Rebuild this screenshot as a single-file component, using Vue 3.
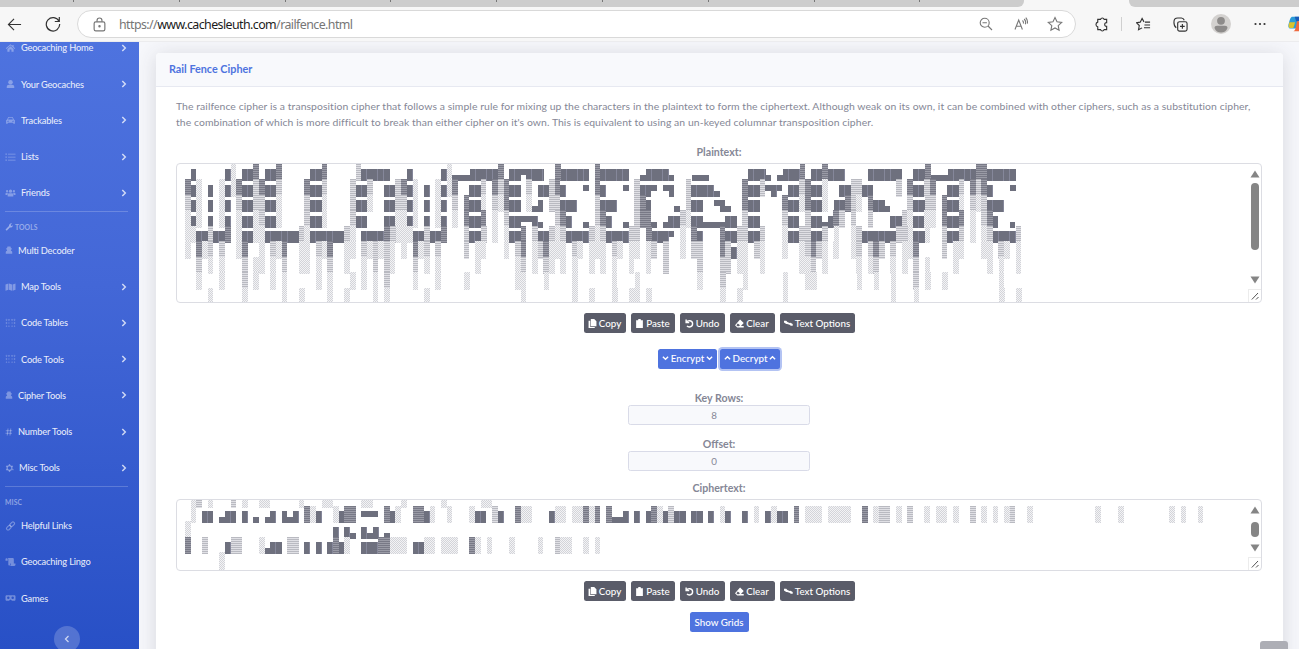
<script setup>
const letters = {
  W: [' █     █░', '▓█░ █ ░█░', '▒█░ █ ░█ ', '░█░ █ ░█ ', '░░██▒██▓ ', '░ ▓░▒ ▒  ', '  ▒ ░ ░  ', '  ░   ░  ', '    ░    '],
  I: [' ██▓', '▓██▒', '▒██▒', '░██░', '░██░', '░▓  ', ' ▒ ░', ' ▒ ░', ' ░  '],
  L: [' ██▓    ', '▓██▒    ', '▒██░    ', '▒██░    ', '░██████▒', '░ ▒░▓  ░', '░ ░ ▒  ░', '  ░ ░   ', '    ░  ░'],
  O: [' ▒█████  ', '▒██▒  ██▒', '▒██░  ██▒', '▒██   ██░', '░ ████▓▒░', '░ ▒░▒░▒░ ', '  ░ ▒ ▒░ ', '░ ░ ░ ▒  ', '    ░ ░  '],
  T: ['▄▄▄█████▓', '▓  ██▒ ▓▒', '▒ ▓██░ ▒░', '░ ▓██▓ ░ ', '  ▒██▒ ░ ', '  ▒ ░░   ', '    ░    ', '  ░      ', '         '],
  R: [' ██▀███  ', '▓██ ▒ ██▒', '▓██ ░▄█ ▒', '▒██▀▀█▄  ', '░██▓ ▒██▒', '░ ▒▓ ░▒▓░', '  ░▒ ░ ▒░', '  ░░   ░ ', '   ░     '],
  E: ['▓█████ ', '▓█   ▀ ', '▒███   ', '▒▓█  ▄ ', '░▒████▒', '░░ ▒░ ░', ' ░ ░  ░', '   ░   ', '   ░  ░'],
  C: [' ▄████▄  ', '▒██▀ ▀█  ', '▒▓█    ▄ ', '▒▓▓▄ ▄██▒', '▒ ▓███▀ ░', '░ ░▒ ▒  ░', '  ░  ▒   ', '░        ', '░ ░      '],
  A: [' ▄▄▄      ', '▒████▄    ', '▒██  ▀█▄  ', '░██▄▄▄▄██ ', ' ▓█   ▓██▒', ' ▒▒   ▓▒█░', '  ▒   ▒▒ ░', '  ░   ▒   ', '      ░  ░'],
  M: [' ███▄ ▄███▓', '▓██▒▀█▀ ██▒', '▓██    ▓██░', '▒██    ▒██ ', '▒██▒   ░██▒', '░ ▒░   ░  ░', '░  ░      ░', '░      ░   ', '       ░   '],
  P: [' ██▓███  ', '▓██░  ██▒', '▓██░ ██▓▒', '▒██▄█▓▒ ▒', '▒██▒ ░  ░', '▒▓▒░ ░  ░', '░▒ ░     ', '░░       ', '         '],
  S: ['  ██████ ', '▒██    ▒ ', '░ ▓██▄   ', '  ▒   ██▒', '▒██████▒▒', '▒ ▒▓▒ ▒ ░', '░ ░▒  ░ ░', '░  ░  ░  ', '      ░  ']
}
const kinds = { '█': 'full', '▄': 'lower', '▀': 'upper', '▓': 'dark', '▒': 'medium', '░': 'light', ' ': 'blank' }
function runs(line) {
  return (line.match(/(.)\1*/gu) || []).map(t => ({ t, n: [...t].length, k: kinds[t[0]] }))
}
const plain = Array.from({ length: 9 }, (_, r) =>
  runs([...'WILLOWTREECAMPSITE'].map(c => letters[c][r]).join('')))

function place(parts) {
  let s = ''
  for (const [at, t] of parts) s = s.padEnd(at, ' ') + t
  return runs(s)
}
const cipher = [
  [[1, '░▒'], [4, '░'], [8, '▒'], [10, '░'], [13, '░░'], [20, '░'], [24, '░░'], [31, '░░'], [38, '░'], [45, '░'], [52, '░░']],
  [[1, '░'], [3, '██'], [6, '▄██'], [10, '█'], [12, '▄'], [14, '▄█'], [17, '█▄█'], [21, '▓░█'], [26, '░█▓▓'], [31, '▀▀▀'], [35, '▓█░'], [40, '▓▓█░'], [46, '░'], [50, '░██'], [54, '▒█'], [58, '▓░░'], [64, '█░░'], [68, '░░▓░▓'], [74, '▓▄▄█'], [79, '█'], [81, '█▓░█▒██'], [89, '██'], [92, '█'], [94, '░█'], [98, '█'], [100, '░'], [102, '█░██'], [107, '▓'], [109, '░░░'], [113, '░░░░'], [119, '▓'], [121, '░▒▒'], [125, '░'], [127, '▒'], [130, '░'], [132, '░░'], [135, '░'], [138, '▒'], [140, '░'], [142, '░'], [144, '░▒'], [148, '░'], [160, '░'], [164, '░'], [173, '░'], [175, '░'], [178, '░']],
  [[0, '░'], [26, '█'], [28, '█▄'], [31, '█▄█'], [35, '▄']],
  [[0, '▓'], [3, '▒'], [7, '█▒▒'], [13, '░▄██'], [18, '▒▒'], [21, '█'], [23, '█'], [25, '█▓█░'], [31, '███▓▓░░░'], [40, '██░░'], [45, '░░░'], [50, '▓░'], [53, '░'], [57, '░'], [62, '░'], [65, '▒░░'], [70, '░'], [72, '░']],
  [[6, '░']]
].map(place)

const areas = { plain, cipher }
const groups = [
  { items: [
    { icon: 'home', label: 'Geocaching Home', more: true },
    { icon: 'user', label: 'Your Geocaches', more: true },
    { icon: 'car', label: 'Trackables', more: true },
    { icon: 'list', label: 'Lists', more: true },
    { icon: 'users', label: 'Friends', more: true }
  ] },
  { title: 'TOOLS', wrench: true, items: [
    { icon: 'spy', label: 'Multi Decoder', tight: true },
    { icon: 'map', label: 'Map Tools', more: true },
    { icon: 'braille', label: 'Code Tables', more: true },
    { icon: 'braille', label: 'Code Tools', more: true },
    { icon: 'spy', label: 'Cipher Tools', tight: true, more: true },
    { icon: 'hash', label: 'Number Tools', tight: true, more: true },
    { icon: 'gear', label: 'Misc Tools', mid: true, more: true }
  ] },
  { title: 'MISC', items: [
    { icon: 'link', label: 'Helpful Links' },
    { icon: 'scroll', label: 'Geocaching Lingo' },
    { icon: 'goggles', label: 'Games' }
  ] }
]
const icons = {
  home: '<path d="M8 2 0.5 8.5l1 1L8 4l6.500 5.500 1-1L13 6.300V3h-2v1.600z"/><path d="M3 9.500 8 5.300l5 4.200V14H9.500v-3.500h-3V14H3z"/>',
  user: '<circle cx="8" cy="5" r="3.600"/><path d="M2 14.500v-2c0-2 1.500-3.300 3.500-3.300h5c2 0 3.500 1.300 3.500 3.300v2z"/>',
  car: '<path fill-rule="evenodd" d="M4.500 3h7l2 4 1.500 1.500V14h-2.500v-1.500h-9V14H1V8.500L2.500 7zM5.300 4.500 4 7.200h8l-1.300-2.700zM4 9a1 1 0 1 0 .01 2.200A1 1 0 0 0 4 9zm8 0a1 1 0 1 0 .01 2.200A1 1 0 0 0 12 9z"/>',
  list: '<path d="M0 2.500h2v1.800H0zM4 2.800h12v1.200H4zM0 7.200h2V9H0zM4 7.500h12v1.200H4zM0 12h2v1.800H0zM4 12.200h12v1.200H4z"/>',
  users: '<circle cx="8" cy="5" r="2.600"/><circle cx="2.500" cy="5" r="1.700"/><circle cx="13.500" cy="5" r="1.700"/><path d="M3.500 13.500V11c0-1.500 1-2.500 2.500-2.500h4c1.500 0 2.500 1 2.500 2.500v2.500zM0 11V9c0-1 .8-1.600 1.600-1.600H4L2.800 11zM16 11V9c0-1-.8-1.600-1.600-1.600H12l1.200 3.600z"/>',
  spy: '<path d="M5 1h6l1 3.500 2 .7v1.300H2V5.200l2-.7zM3.500 6.500h9c0 2-1 4-4.500 4s-4.500-2-4.500-4zM1.500 15.500V13c0-2 .8-3.200 2.800-3.400h7.400c2 .2 2.800 1.400 2.800 3.400v2.500z"/>',
  map: '<path d="M0 4l4.700-1.700v10L0 14zM5.600 2.300l4.800 1.700v10l-4.800-1.700zM11.300 4 16 2.300v10L11.300 14z"/>',
  braille: '<g fill="none" stroke="currentColor" stroke-width=".9"><circle cx="1.500" cy="3" r="1"/><circle cx="5.500" cy="3" r="1"/><circle cx="10.500" cy="3" r="1"/><circle cx="14.500" cy="3" r="1"/><circle cx="1.500" cy="8" r="1"/><circle cx="5.500" cy="8" r=".5"/><circle cx="10.500" cy="8" r=".5"/><circle cx="14.500" cy="8" r="1"/><circle cx="1.500" cy="13" r=".6"/><circle cx="5.500" cy="13" r=".6"/><circle cx="10.500" cy="13" r=".6"/><circle cx="14.500" cy="13" r=".6"/></g>',
  hash: '<path fill="none" stroke="currentColor" stroke-width="1.800" d="M6 1 4.500 15M11.500 1 10 15M1.500 5.500h13M1 10.500h13"/>',
  gear: '<circle cx="8" cy="8" r="4.200" fill="none" stroke="currentColor" stroke-width="2.500"/><path d="M6.800 1h2.400v2.500H6.800zM6.800 12.500h2.400V15H6.800zM1.400 5.500l1.200-2 2.200 1.200-1.200 2zM12.400 11.300l1.200-2 2 1.200-1.200 2zM1.400 10.500l2.200-1.200 1.200 2-2.200 1.200zM11.200 4.700l2.200-1.200 1.200 2-2.200 1.200z"/>',
  link: '<g fill="none" stroke="currentColor" stroke-width="1.800" transform="rotate(-45 8 8)"><rect x="0" y="5.500" width="8.500" height="5" rx="2.500"/><rect x="7.500" y="5.500" width="8.500" height="5" rx="2.500"/></g>',
  scroll: '<path d="M0 3.500C0 1.500 3.500 1.500 3.500 3.500V6H0zM3.500 1.700h8c1 0 1.800.8 1.800 2v6.500H7.500V12c0 2-3 2-3 0V4c0-1-.3-1.800-1-2.300zM8.500 10.500H16V12c0 1.500-.8 2.300-2 2.300H6.500c1.500 0 2-1 2-2.300z"/>',
  goggles: '<path fill-rule="evenodd" d="M2 3.500h12c1.200 0 2 .8 2 2v5c0 1.200-.8 2-2 2h-3.500L8 10.300l-2.500 2.200H2c-1.200 0-2-.8-2-2v-5c0-1.200.8-2 2-2zm2.500 2.200a2 2 0 1 0 .01 4 2 2 0 0 0-.01-4zm7 0a2 2 0 1 0 .01 4 2 2 0 0 0-.01-4z"/>'
}
const tools = [
  { label: 'Copy', w: 42, svg: '<path d="M5 0h6l4 4v9H5zM1 3h3v11h8v2H1z"/>' },
  { label: 'Paste', w: 44, svg: '<path d="M2 2h3.500a2.500 2.500 0 0 1 5 0H14v14H2z"/>' },
  { label: 'Undo', w: 45, svg: '<path fill="none" stroke="currentColor" stroke-width="2.500" d="M2 1v5.500h5.500M2.500 6C5 1.500 13.500 2 13.500 8.500S6 15 3.500 12.500"/>' },
  { label: 'Clear', w: 45, svg: '<path fill-rule="evenodd" d="M9 1l6.500 6-5 5.500h5V15H4L0 11zM5 8l-2.500 3 2 1.800h2L9 11z"/>' },
  { label: 'Text Options', w: 75, svg: '<path d="M0 3h4l2 2.500 4 1.500 1.500-.5 4 2.500v3h-3.500l-2-2L5.500 9 4 9 0 6z"/>' }
]
const ticks = 9
</script>

<template>
  <div class="window">
    <div class="tabs">
      <div class="tabs-left"><i v-for="n in ticks" :key="n"></i></div>
      <div class="tabs-right"></div>
    </div>
    <div class="toolbar">
      <svg class="back" viewBox="0 0 16 16"><path d="M15 8H1.500M7.500 2 1.500 8l6 6" /></svg>
      <svg class="reload" viewBox="0 0 16 16"><path d="M14 5.300A6.700 6.700 0 1 0 14.700 8M14.300 1v4.500H9.800" /></svg>
      <div class="address">
        <svg class="lock" viewBox="0 0 12 14"><rect x="1" y="4.500" width="10" height="8.500" rx="1.500" /><path d="M3.700 4.500V3.200a2.300 2.300 0 0 1 4.600 0v1.300" /><circle cx="6" cy="8.700" r=".6" /></svg>
        <span class="url">https://<b>www.cachesleuth.com</b>/railfence.html</span>
        <span class="spacer"></span>
        <svg class="a1" viewBox="0 0 14 14"><circle cx="5.700" cy="5.700" r="4.500" /><path d="M9 9l4 4M3.500 5.700h4.400" /></svg>
        <svg class="a2" viewBox="0 0 14 14"><path d="M1 12.500 4.700 3l3.700 9.500M2.300 9.300H7M8.500 3.500a3 3 0 0 1 .8 3M10.200 2a5 5 0 0 1 1.100 5.200M11.800.7a7 7 0 0 1 1.500 6" /></svg>
        <svg class="a3" viewBox="0 0 16 16"><path d="M8 1.500l2 4.300 4.700.6-3.500 3.200.9 4.700L8 12l-4.100 2.300.9-4.700L1.300 6.400 6 5.800z" /></svg>
      </div>
      <svg class="puzzle" viewBox="0 0 16 16"><path d="M4 2.500h3a2 2 0 0 1 3.800 0H13.500V6c-2.800-.2-2.800 4.200 0 4v3.500h-2.700a2 2 0 0 1-3.800 0H4V10.500a2.600 2.600 0 0 1 0-5z" /></svg>
      <span class="bar"></span>
      <svg class="fav" viewBox="0 0 16 16"><path d="M8.500 5.200 6.500 1.500l-2 4-4 .6 3 3-.8 4.500 3.800-2M9.500 5.500H15M9 8.500h6M8.500 11.500H15" /></svg>
      <svg class="coll" viewBox="0 0 16 16"><rect x="5" y="5" width="10" height="10" rx="2" /><path d="M10 7.500v5M7.500 10h5M3.500 11.500C2 10.500 1 8 1 5.500 1 2.500 2.500 1 5 1h4c1.500 0 2.500 1 3 2.500" /></svg>
      <svg class="avatar" viewBox="0 0 20 20"><circle cx="10" cy="10" r="10" fill="#d3d1cf" /><circle cx="10" cy="6.800" r="3.900" fill="#8d8b8a" /><path d="M3.500 14c0-1.500 1-2.300 2.500-2.300h8c1.500 0 2.500.8 2.500 2.300-1 3-3.500 4.500-6.500 4.500S4.500 17 3.500 14z" fill="#8d8b8a" /></svg>
      <svg class="dots" viewBox="0 0 12 4"><circle cx="1.500" cy="2" r="1.100" /><circle cx="6" cy="2" r="1.100" /><circle cx="10.500" cy="2" r="1.100" /></svg>
      <svg class="copilot" viewBox="0 0 20 20"><path d="M5 2h8l-4 13H3c-3 0-3-3-2-6 1-4 2-7 4-7z" fill="#2a9bd8" /><path d="M1.500 8 8 8l-2 6.500H3c-3 0-2.500-3-1.500-6.500z" fill="#d9c42d" /><path d="M7.500 2H13l2 5H9z" fill="#1c5bb8" /><path d="M10 7h8c2 3-1 11-5 11H6c2 0 2.500-3 4-11z" fill="#ee6a3f" /></svg>
    </div>

    <div class="page">
      <aside>
        <nav>
          <section v-for="(g, gi) in groups" :key="gi">
            <h6 v-if="g.title">
              <svg v-if="g.wrench" viewBox="0 0 16 16"><path d="M1 13l7-7a4.500 4.500 0 0 1 6-5l-2.700 2.700.8 1.800 1.800.6L15.500 4a4.500 4.500 0 0 1-5.800 5L3.500 15.300z" /></svg>{{ g.title }}
            </h6>
            <a v-for="it in g.items" :key="it.label" :class="{ tight: it.tight, mid: it.mid }">
              <svg class="nav-icon" viewBox="0 0 16 16" v-html="icons[it.icon]"></svg>
              <span>{{ it.label }}</span>
              <svg v-if="it.more" class="chev" viewBox="0 0 6 8"><path d="M1.300 1l3 3-3 3" /></svg>
            </a>
          </section>
          <div class="toggle"><svg viewBox="0 0 6 8"><path d="M4.500 1l-3 3 3 3" /></svg></div>
        </nav>
      </aside>

      <main>
        <div class="card">
          <header>Rail Fence Cipher</header>
          <div class="body">
            <p>
              <span>The railfence cipher is a transposition cipher that follows a simple rule for mixing up the characters in the plaintext to form the ciphertext. Although weak on its own, it can be combined with other ciphers, such as a substitution cipher,</span>
              <span>the combination of which is more difficult to break than either cipher on it's own. This is equivalent to using an un-keyed columnar transposition cipher.</span>
            </p>
            <template v-for="(rows, name) in areas" :key="name">
              <template v-if="name === 'cipher'">
                <div class="actions">
                  <button class="blue enc"><svg viewBox="0 0 8 6"><path d="M1 1.500l3 3 3-3" /></svg>Encrypt<svg viewBox="0 0 8 6"><path d="M1 1.500l3 3 3-3" /></svg></button>
                  <button class="blue dec"><svg viewBox="0 0 8 6"><path d="M1 4.500l3-3 3 3" /></svg>Decrypt<svg viewBox="0 0 8 6"><path d="M1 4.500l3-3 3 3" /></svg></button>
                </div>
                <label class="key">Key Rows:</label>
                <div class="field">8</div>
                <label class="offset">Offset:</label>
                <div class="field">0</div>
              </template>
              <label :class="name">{{ name === 'plain' ? 'Plaintext:' : 'Ciphertext:' }}</label>
              <div class="area" :class="name">
                <div class="art">
                  <div v-for="(row, ri) in rows" :key="ri" class="row">
                    <span v-for="(r, i) in row" :key="i" :class="r.k" :style="{ width: r.n * 5.694 + 'px' }">{{ r.t }}</span>
                  </div>
                </div>
                <div class="scroll">
                  <svg viewBox="0 0 10 8"><path d="M5 .5 9.500 7.500H.5z" /></svg>
                  <div class="track"><div class="thumb"></div></div>
                  <svg viewBox="0 0 10 8"><path d="M5 7.500 9.500.5H.5z" /></svg>
                  <div class="grip"><svg viewBox="0 0 8 8"><path d="M.8 7.500 7 1M5 7.500 7.500 5" /></svg></div>
                </div>
              </div>
              <div class="tools">
                <button v-for="t in tools" :key="t.label" :style="{ width: t.w + 'px' }"><svg viewBox="0 0 16 16" v-html="t.svg"></svg>{{ t.label }}</button>
              </div>
            </template>
            <button class="blue grids">Show Grids</button>
          </div>
        </div>
      </main>
      <div class="to-top"></div>
    </div>
  </div>
</template>

<style>
body { overflow: hidden; }
</style>
<style scoped>
* { box-sizing: border-box; }
.window { width: 1299px; height: 649px; overflow: hidden; display: flex; flex-direction: column; font-family: Lato, "Open Sans", sans-serif; background: #f7f7f7; }
.tabs { height: 7px; display: flex; justify-content: space-between; flex: none; }
.tabs-left { width: 1024px; background: #cdcdcd; border-radius: 0 0 6px 0; display: flex; padding-left: 73px; gap: 104.800px; }
.tabs-left i { width: 1px; height: 2px; background: #777; }
.tabs-right { width: 170px; background: #cdcdcd; border-radius: 0 0 0 6px; }
.toolbar { height: 35px; flex: none; display: flex; align-items: center; background: #f7f7f7; border-bottom: 1px solid #ececee; overflow: hidden; }
.toolbar svg { fill: none; stroke: #333; stroke-width: 1.200; flex: none; }
.back { width: 15px; height: 15px; margin-left: 7px; }
.reload { width: 16px; height: 16px; margin-left: 23px; }
.address { width: 999px; height: 28px; flex: none; margin-left: 16px; border: 1px solid #d9d9d9; border-radius: 14px; background: #fff; display: flex; align-items: center; }
.toolbar .address svg { stroke: #777; stroke-width: 1.100; }
.lock { width: 13px; height: 15px; margin-left: 15px; }
.url { margin-left: 13px; font: 12.400px "Noto Sans", sans-serif; letter-spacing: -.57px; color: #767676; white-space: nowrap; }
.url b { font-weight: 400; color: #1b1b1b; }
.spacer { flex: 1; }
.a1 { width: 14px; height: 14px; margin-right: 21px; }
.a2 { width: 14px; height: 14px; margin-right: 19px; }
.a3 { width: 16px; height: 16px; margin-right: 12px; }
.puzzle { width: 15px; height: 15px; margin-left: 18px; }
.bar { width: 1px; height: 14px; flex: none; background: #d0d0d0; margin-left: 12px; }
.fav { width: 15px; height: 15px; margin-left: 14px; }
.coll { width: 15px; height: 15px; margin-left: 22px; }
.toolbar .avatar { width: 20px; height: 20px; margin-left: 23px; stroke: none; }
.toolbar .dots { width: 12px; height: 4px; margin-left: 23px; fill: #333; stroke: none; }
.toolbar .copilot { width: 20px; height: 18px; margin-left: 21px; stroke: none; }

.page { flex: 1; min-height: 0; display: flex; position: relative; background: #f6f7fb; }
aside { width: 139px; flex: none; overflow: hidden; background: linear-gradient(180deg, #4e73df 0, #4367d7 40%, #2850c6 100%); }
nav { margin-top: -12.300px; }
h6 { margin: 0 11px 0 5px; height: 21.400px; padding-top: 9px; display: flex; align-items: center; border-top: 1px solid rgba(255,255,255,.2); font-size: 6.800px; font-weight: 700; color: rgba(255,255,255,.45); letter-spacing: .1px; }
h6 svg { width: 8px; height: 8px; fill: currentColor; margin-right: 2px; }
nav a { height: 36.250px; display: flex; align-items: center; padding: 0 12px 0 5px; color: rgba(255,255,255,.88); font-size: 9.300px; letter-spacing: -.2px; font-weight: 500; white-space: nowrap; }
.nav-icon { width: 11px; height: 10px; margin-right: 5px; fill: currentColor; color: rgba(255,255,255,.34); }
.tight .nav-icon { width: 8px; }
.mid .nav-icon { width: 9px; }
.chev { width: 6px; height: 8px; margin-left: auto; fill: none; stroke: rgba(255,255,255,.75); stroke-width: 1.500; }
.toggle { width: 26px; height: 26px; border-radius: 50%; margin: 10px 0 0 54px; background: rgba(255,255,255,.2); display: flex; align-items: center; justify-content: center; }
.toggle svg { width: 6px; height: 8px; fill: none; stroke: rgba(255,255,255,.7); stroke-width: 1.300; }

main { flex: 1; padding: 11px 16px 0 17px; overflow: hidden; }
.card { height: 700px; background: #fff; border-radius: 4px; box-shadow: 0 2px 20px rgba(58,59,69,.16); color: #858796; }
.card header { height: 34px; background: #f8f9fc; border-bottom: 1px solid #e7e9f1; border-radius: 4px 4px 0 0; padding-left: 13px; line-height: 32px; font-size: 10.800px; font-weight: 700; color: #4e73df; }
.body { padding: 11px 21px 0 20px; display: flex; flex-direction: column; align-items: center; }
p { margin: 0; align-self: stretch; font-size: 10.400px; letter-spacing: .076px; line-height: 16px; height: 32px; }
p span { display: block; white-space: nowrap; }
label { font-size: 10.600px; font-weight: 700; line-height: 14px; height: 14px; color: #858796; }
label.plain { margin-top: 15px; }
.area { width: 1086px; border: 1px solid #dcdde3; border-radius: 4px; display: flex; justify-content: space-between; overflow: hidden; background: #fff; flex: none; }
.area.plain { height: 140px; margin-top: 4px; }
.area.cipher { height: 72px; margin-top: 4px; }
.art { padding: 1.500px 0 0 8px; font: 9.400px/12px "DejaVu Sans Mono", monospace; }
.cipher .art { margin-top: -9.500px; }
.row { height: 15.550px; display: flex; align-items: flex-end; white-space: pre; }
.row span { flex: none; height: 12px; overflow: hidden; color: transparent; }
.row .full { background: repeating-linear-gradient(90deg, #6e707e 0 5.100px, #85879a 5.100px 5.694px); }
.row .lower { background: linear-gradient(transparent 50%, #6e707e 50%); }
.row .upper { background: linear-gradient(#6e707e 50%, transparent 50%); }
.row .dark, .row .medium, .row .light { height: 17.500px; }
.row .dark { background: repeating-linear-gradient(#787986 0 1px, #9a9ba6 1px 2px); }
.row .medium { background: repeating-linear-gradient(#b9bac1 0 1px, #e0e0e5 1px 2px); }
.row .light { background: repeating-conic-gradient(#d3d4d9 0 25%, #f3f3f5 0 50%) 0 0 / 2px 2px; }
.scroll { width: 13px; display: flex; flex-direction: column; align-items: center; padding-top: 6px; }
.scroll > svg { width: 10px; height: 8px; fill: #858585; flex: none; }
.track { flex: 1; padding: 5px 0; }
.cipher .track { padding-top: 7.500px; }
.thumb { width: 8px; height: 67px; border-radius: 4px; background: #858585; }
.cipher .thumb { height: 15px; }
.grip { width: 13px; height: 13px; margin-top: 5px; flex: none; border: 1px solid #ececec; border-width: 1px 0 0 1px; display: flex; align-items: center; justify-content: center; }
.grip svg { width: 8px; height: 8px; fill: none; stroke: #555; stroke-width: 1; }
.tools { display: flex; gap: 5px; margin-top: 10px; }
button { height: 20px; border: 0; border-radius: 2.500px; padding: 0; background: #5a5c69; color: #fff; font-family: inherit; font-size: 9.800px; font-weight: 500; display: flex; align-items: center; justify-content: center; gap: 2px; white-space: nowrap; }
.tools svg { width: 9px; height: 9px; fill: currentColor; }
.blue { background: #4e73df; }
.blue svg { width: 7px; height: 6px; fill: none; stroke: #fff; stroke-width: 1.500; }
.actions { display: flex; gap: 3px; margin-top: 16px; }
.actions button { padding-bottom: 2px; }
.enc { width: 59px; }
.dec { width: 60px; box-shadow: 0 0 0 2px #b3c3f3; }
.key { margin-top: 22px; }
.field { width: 182px; height: 20px; border: 1px solid #d9dbe8; border-radius: 2.500px; background: #f8f9fc; text-align: center; font-size: 9.800px; line-height: 18px; padding-right: 10px; }
.offset { margin-top: 12px; }
label.cipher { margin-top: 10px; }
.grids { width: 59px; margin-top: 10.500px; }
.to-top { position: absolute; right: 11px; bottom: 0; width: 28px; height: 8px; background: #adaeb5; border-radius: 3px 3px 0 0; }
</style>
